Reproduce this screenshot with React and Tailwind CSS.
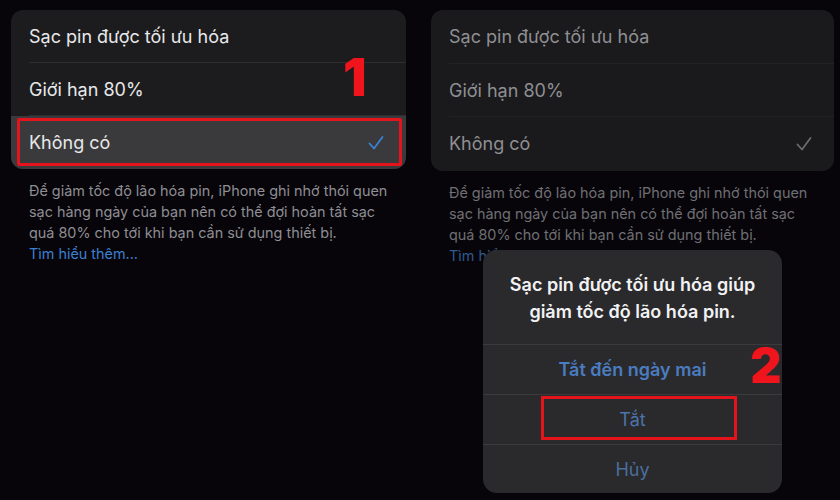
import React from 'react';

const font = { fontFamily: 'Inter, "Noto Sans", sans-serif' };

const CheckMark = ({ className }) => (
  <svg viewBox="0 0 16 16" className={className} fill="none" stroke="currentColor" strokeWidth="1.8" strokeLinecap="round" strokeLinejoin="round">
    <polyline points="1.5,8.5 6,13.5 14.5,2" />
  </svg>
);

const Footer = ({ dim }) => (
  <div className={`mt-[11px] text-[14.4px] leading-[21px] ${dim ? 'text-[#6f6f73]' : 'text-[#8e8e93]'}`}>
    <p>Để giảm tốc độ lão hóa pin, iPhone ghi nhớ thói quen</p>
    <p>sạc hàng ngày của bạn nên có thể đợi hoàn tất sạc</p>
    <p>quá 80% cho tới khi bạn cần sử dụng thiết bị.</p>
    <p className={dim ? 'text-[#2f5a8c]' : 'text-[#3d7fd0]'}>Tìm hiểu thêm...</p>
  </div>
);

const App = () => {
  const options = ['Sạc pin được tối ưu hóa', 'Giới hạn 80%', 'Không có'];

  return (
    <div className="w-[840px] h-[500px] bg-[#07050a] overflow-hidden relative flex" style={font}>
      {/* left screen */}
      <div className="w-[420px] pl-[11px] pt-[10px] relative">
        <div className="w-[395px] bg-[#1c1c1e] rounded-[12px] overflow-hidden">
          {options.map((o, i) => (
            <div key={o} className={`relative h-[53px] flex items-center pl-[18px] pr-[22px] ${i === 2 ? 'bg-[#3a3a3c]' : ''}`}>
              <span className="text-[18px] text-[#e8e8ea]">{o}</span>
              {i === 2 && <CheckMark className="ml-auto w-[16px] h-[16px] text-[#3b82d6]" />}
              {i < 2 && <div className="absolute left-[18px] right-0 bottom-0 h-px bg-[#2e2e31]" />}
              {i === 2 && <div className="absolute left-[6px] right-[4px] top-[2px] bottom-[3px] border-[3px] border-[#e3141c] rounded-[2px]" />}
            </div>
          ))}
        </div>
        <div className="pl-[18px]">
          <Footer />
        </div>
        <span className="absolute left-[343px] top-[52px] text-[52px] font-black text-[#f0141c] leading-none">1</span>
      </div>

      {/* right screen */}
      <div className="w-[420px] pl-[11px] pt-[10px] relative">
        <div className="w-[403px] bg-[#1a1a1c] rounded-[12px] overflow-hidden">
          {options.map((o, i) => (
            <div key={o} className="relative h-[53.5px] flex items-center pl-[18px] pr-[22px]">
              <span className="text-[18px] text-[#8f8f93]">{o}</span>
              {i === 2 && <CheckMark className="ml-auto w-[16px] h-[16px] text-[#6b6b6f]" />}
              {i < 2 && <div className="absolute left-[18px] right-0 bottom-0 h-px bg-[#222225]" />}
            </div>
          ))}
        </div>
        <div className="pl-[18px]">
          <Footer dim />
        </div>

        {/* action sheet overlay */}
        <div className="absolute left-[63px] top-[250px] w-[299px] bg-[#2a2a2c] rounded-[14px] overflow-hidden">
          <div className="h-[94px] flex flex-col items-center justify-center pt-[2px] text-[18px] leading-[27px] font-semibold text-[#f2f2f4] text-center">
            <p>Sạc pin được tối ưu hóa giúp</p>
            <p>giảm tốc độ lão hóa pin.</p>
          </div>
          <div className="h-px bg-[#3b3b3e]" />
          <div className="h-[49px] flex items-center justify-center text-[18px] font-semibold text-[#4a7cc0]">Tắt đến ngày mai</div>
          <div className="h-px bg-[#3b3b3e]" />
          <div className="relative h-[49px] flex items-center justify-center text-[18px] text-[#4d74aa]">
            Tắt
            <div className="absolute left-[58px] right-[45px] top-[1px] bottom-[4px] border-[3px] border-[#e3141c]" />
          </div>
          <div className="h-px bg-[#3b3b3e]" />
          <div className="h-[48px] flex items-center justify-center text-[18px] text-[#4a6e9e]">Hủy</div>
        </div>
        <span className="absolute left-[330px] top-[342px] text-[48px] font-black text-[#f0141c] leading-none">2</span>
      </div>
    </div>
  );
};

export default App;
